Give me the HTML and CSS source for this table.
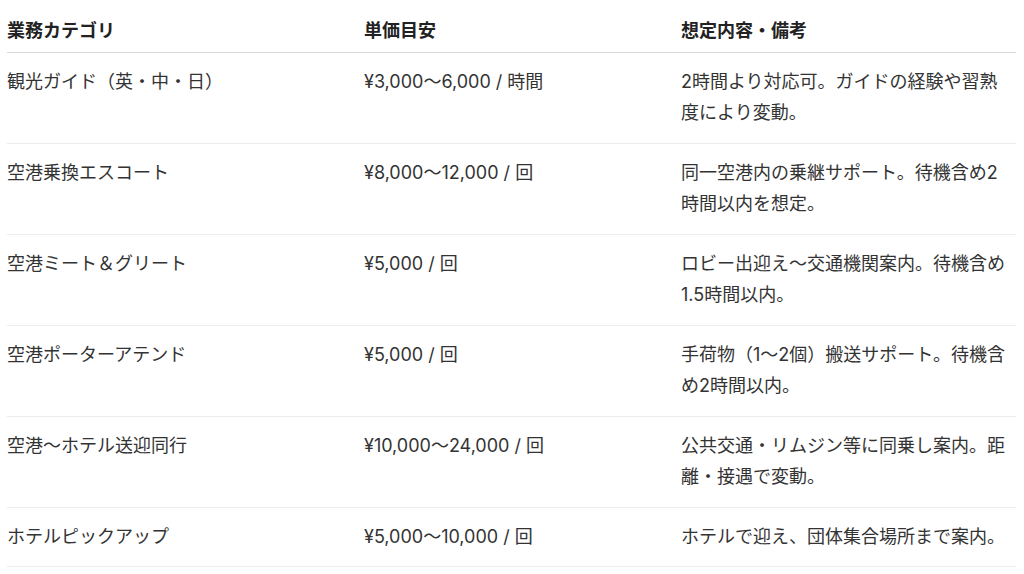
FILE: index.html
```html
<!DOCTYPE html>
<html lang="ja">
<head>
<meta charset="utf-8">
<title>業務カテゴリ</title>
<link rel="stylesheet" href="styles.css">
</head>
<body>
<main class="page">
  <table class="rates">
    <colgroup>
      <col class="col-cat">
      <col class="col-price">
      <col class="col-note">
    </colgroup>
    <thead>
      <tr>
        <th>業務カテゴリ</th>
        <th>単価目安</th>
        <th>想定内容・備考</th>
      </tr>
    </thead>
    <tbody>
      <tr>
        <td>観光ガイド（英・中・日）</td>
        <td>¥3,000〜6,000 / 時間</td>
        <td>2時間より対応可。ガイドの経験や習熟度により変動。</td>
      </tr>
      <tr>
        <td>空港乗換エスコート</td>
        <td>¥8,000〜12,000 / 回</td>
        <td>同一空港内の乗継サポート。待機含め2時間以内を想定。</td>
      </tr>
      <tr>
        <td>空港ミート＆グリート</td>
        <td>¥5,000 / 回</td>
        <td>ロビー出迎え〜交通機関案内。待機含め1.5時間以内。</td>
      </tr>
      <tr>
        <td>空港ポーターアテンド</td>
        <td>¥5,000 / 回</td>
        <td>手荷物（1〜2個）搬送サポート。待機含め2時間以内。</td>
      </tr>
      <tr>
        <td>空港〜ホテル送迎同行</td>
        <td>¥10,000〜24,000 / 回</td>
        <td>公共交通・リムジン等に同乗し案内。距離・接遇で変動。</td>
      </tr>
      <tr>
        <td>ホテルピックアップ</td>
        <td>¥5,000〜10,000 / 回</td>
        <td>ホテルで迎え、団体集合場所まで案内。</td>
      </tr>
    </tbody>
  </table>
</main>
</body>
</html>
```
FILE: styles.css
```css
html, body {
  margin: 0;
  padding: 0;
  background: #ffffff;
}

body {
  font-family: "Inter", "Noto Sans CJK JP", sans-serif;
  font-size: 18px;
  color: #333333;
}

.page {
  padding: 8px 8px 0 7px;
}

.rates {
  width: 1009px;
  border-collapse: collapse;
  table-layout: fixed;
}

.col-cat { width: 357px; }
.col-price { width: 317px; }
.col-note { width: 335px; }

.rates th {
  text-align: left;
  font-weight: 700;
  color: #222222;
  line-height: 31.5px;
  padding: 7px 5px 5px 0;
  border-bottom: 1px solid #d9d9d9;
  vertical-align: top;
}

.rates td {
  text-align: left;
  font-weight: 400;
  line-height: 31.5px;
  padding: 13px 5px 14px 0;
  border-bottom: 1px solid #ececec;
  vertical-align: top;
}
```
